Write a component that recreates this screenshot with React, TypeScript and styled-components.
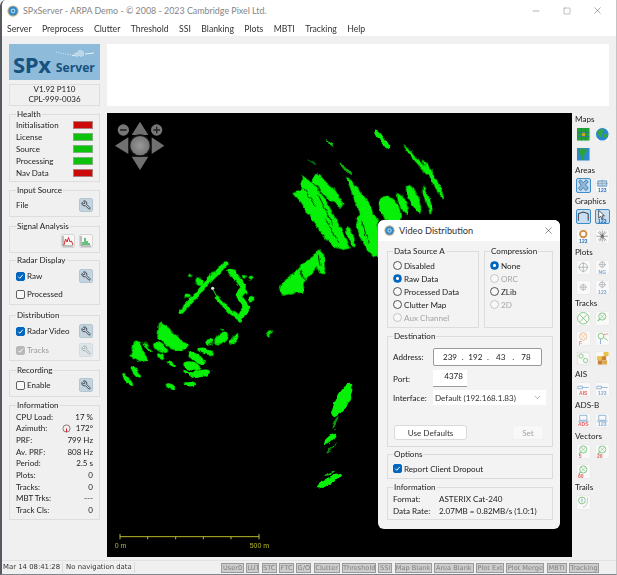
import * as React from 'react';
import styled, { createGlobalStyle } from 'styled-components';
import { Wrench, X, Minus, Square, ChevronDown } from 'lucide-react';

const UI_FONT = 'Lato, "Noto Sans", Arial, sans-serif';

const GlobalStyle = createGlobalStyle`
  html, body {
    margin: 0;
    background: #f0f0f0;
  }
  * {
    box-sizing: border-box;
  }
`;

const Win = styled.div`
  width: 617px;
  height: 575px;
  display: flex;
  flex-direction: column;
  background: #f0f0f0;
  border-left: 2px solid #555a60;
  border-right: 1px solid #c4c4c4;
  border-bottom: 1px solid #80858a;
  border-top-left-radius: 6px;
  font-family: ${UI_FONT};
  font-size: 8px;
  color: #222;
  overflow: hidden;
  filter: blur(0.25px);
`;
const TitleBar = styled.div`
  height: 20px;
  flex: none;
  display: flex;
  align-items: center;
  background: #fff;
  padding: 1px 3px 0 5px;
  color: #858585;
  font-size: 8.9px;
`;
const TitleText = styled.span`
  margin-left: 4px;
  flex: 1;
`;
const WinControl = styled.span`
  width: 31px;
  display: flex;
  justify-content: center;
  color: #444;
`;
const MenuBar = styled.div`
  height: 16px;
  flex: none;
  display: flex;
  align-items: center;
  gap: 10.4px;
  background: #fff;
  padding-left: 5px;
  font-size: 8.7px;
  color: #333;
`;
const Body = styled.div`
  flex: 1;
  min-height: 0;
  display: flex;
  padding: 8px 0 3px 7px;
`;
const LeftColumn = styled.div`
  width: 91px;
  flex: none;
  display: flex;
  flex-direction: column;
`;
const Logo = styled.div`
  height: 36px;
  position: relative;
  background: #8fbbdb;
  display: flex;
  align-items: flex-end;
  padding: 0 0 5px 4px;
  color: #16527d;
  font-family: "Open Sans", sans-serif;
  font-weight: 700;
`;
const LogoBig = styled.span`
  font-size: 22px;
  line-height: 22px;
  letter-spacing: -0.3px;
`;
const LogoSmall = styled.span`
  font-size: 12.2px;
  line-height: 15px;
  margin-left: 5px;
`;
const LogoWave = styled.svg`
  position: absolute;
  left: 46px;
  top: 5px;
`;
const VersionBox = styled.div`
  height: 22px;
  margin-top: 4px;
  border: 1px solid #dedede;
  text-align: center;
  line-height: 9.6px;
  font-size: 8px;
`;
const Group = styled.fieldset<{ $h: number; $top?: number; $pt?: number }>`
  margin: ${(p) => p.$top ?? 0}px 0 0;
  height: ${(p) => p.$h}px;
  min-width: 0;
  border: 1px solid #dddddd;
  padding: ${(p) => p.$pt ?? 0}px 6px 0;
`;
const Legend = styled.legend`
  margin-left: 0;
  padding: 0 1px;
  line-height: 10px;
  font-size: 8.1px;
`;
const Row = styled.div<{ $h?: number; $mt?: number }>`
  height: ${(p) => p.$h ?? 12}px;
  margin-top: ${(p) => p.$mt ?? 0}px;
  display: flex;
  align-items: center;
  justify-content: space-between;
  white-space: nowrap;
`;
const Indicator = styled.span<{ $on: boolean }>`
  width: 20px;
  height: 8px;
  background: ${(p) => (p.$on ? '#0ac20a' : '#cc0a0a')};
  border: 1px solid ${(p) => (p.$on ? '#7fae7f' : '#b08080')};
`;
const ToolButton = styled.span<{ $dim?: boolean }>`
  width: 14px;
  height: 14px;
  display: flex;
  align-items: center;
  justify-content: center;
  background: ${(p) => (p.$dim ? '#dfe6ea' : '#c3d4df')};
  border: 1px solid ${(p) => (p.$dim ? '#d5dde2' : '#b4c6d2')};
  border-radius: 2px;
  color: ${(p) => (p.$dim ? '#a0a8ad' : '#2b3238')};
`;
const FlippedWrench = styled(Wrench)`
  transform: scaleX(-1);
`;
const PlotButton = styled.span`
  width: 14px;
  height: 14px;
  display: flex;
  background: #f8f8f8;
  border: 1px solid #d6d6d6;
  border-radius: 2px;
`;
const ButtonPair = styled.div`
  display: flex;
  justify-content: flex-end;
  gap: 4px;
  margin-top: 3px;
`;
const CheckLabel = styled.span<{ $disabled?: boolean }>`
  display: flex;
  align-items: center;
  gap: 2px;
  color: ${(p) => (p.$disabled ? '#9a9a9a' : 'inherit')};
`;
const CheckBox = styled.span<{ $checked?: boolean; $disabled?: boolean }>`
  width: 9px;
  height: 9px;
  display: flex;
  border-radius: 2px;
  border: 1px solid ${(p) => (p.$disabled ? '#b8b8b8' : p.$checked ? '#0067c0' : '#606060')};
  background: ${(p) => (p.$disabled ? '#b8b8b8' : p.$checked ? '#0067c0' : '#fafafa')};
`;
const AzimuthValue = styled.span`
  display: flex;
  align-items: center;
  gap: 5px;
`;
const Main = styled.div`
  flex: 1;
  min-width: 0;
  display: flex;
  flex-direction: column;
  margin-left: 7px;
`;
const Banner = styled.div`
  height: 62px;
  flex: none;
  background: #fff;
  margin-right: 7px;
`;
const Workspace = styled.div`
  flex: 1;
  min-height: 0;
  display: flex;
  margin-top: 7px;
`;
const Radar = styled.div`
  width: 465px;
  height: 444px;
  flex: none;
  position: relative;
  background: #000;
`;
const RadarPicture = styled.svg`
  display: block;
`;
const Strip = styled.div`
  flex: 1;
  display: flex;
  flex-direction: column;
  gap: 3px;
  margin-left: 4px;
  padding-top: 1px;
`;
const StripTitle = styled.div`
  height: 10px;
  line-height: 10px;
  margin-left: -1px;
  font-size: 8.1px;
`;
const StripGrid = styled.div`
  display: grid;
  grid-template-columns: 15px 15px;
  grid-auto-rows: 15px;
  column-gap: 4px;
  row-gap: 5px;
  margin-top: 3px;
`;
const StripButton = styled.span<{ $active?: boolean }>`
  display: flex;
  background: ${(p) => (p.$active ? '#c9dff1' : '#f9f9f9')};
  border: 1px solid ${(p) => (p.$active ? '#3f8cc9' : '#ececec')};
  border-radius: 2px;
`;
const StatusBar = styled.div`
  height: 14px;
  flex: none;
  display: flex;
  align-items: center;
  border-top: 1px solid #e2e2e2;
  font-family: "DejaVu Sans", sans-serif;
  font-size: 6.9px;
  color: #333;
  padding-left: 1px;
`;
const StatusCell = styled.span`
  padding-right: 2px;
  margin-right: 3px;
  border-right: 1px solid #dcdcdc;
  line-height: 11px;
  white-space: nowrap;
`;
const Tags = styled.div`
  margin-left: auto;
  display: flex;
  gap: 2.3px;
  padding-right: 17px;
`;
const Tag = styled.span<{ $w: number }>`
  width: ${(p) => p.$w}px;
  height: 10px;
  line-height: 8px;
  text-align: center;
  white-space: nowrap;
  overflow: hidden;
  background: #cdcdcd;
  border: 1px solid #9a9a9a;
  color: #808080;
  font-size: 6.6px;
`;

const Dialog = styled.div`
  position: absolute;
  left: 271px;
  top: 107px;
  width: 182px;
  height: 309px;
  display: flex;
  flex-direction: column;
  background: #f3f3f3;
  border-radius: 6px;
  overflow: hidden;
`;
const DialogTitle = styled.div`
  height: 21px;
  flex: none;
  display: flex;
  align-items: center;
  background: #fff;
  padding: 0 6px;
  font-size: 9.2px;
  color: #333;
`;
const DialogTitleText = styled.span`
  flex: 1;
  margin-left: 4px;
`;
const DialogBody = styled.div`
  padding: 5px 7px 0 9px;
  display: flex;
  flex-direction: column;
  font-size: 8.1px;
`;
const SourceRow = styled.div`
  display: flex;
  gap: 5px;
`;
const DialogGroup = styled.fieldset<{ $h: number; $w?: number; $top?: number; $pt?: number }>`
  margin: ${(p) => p.$top ?? 0}px 0 0;
  width: ${(p) => (p.$w ? `${p.$w}px` : '100%')};
  height: ${(p) => p.$h}px;
  min-width: 0;
  border: 1px solid #dcdcdc;
  padding: ${(p) => p.$pt ?? 3}px 5px 0;
`;
const OptionRow = styled.div<{ $disabled?: boolean }>`
  height: 13px;
  display: flex;
  align-items: center;
  gap: 2px;
  color: ${(p) => (p.$disabled ? '#a4a4a4' : 'inherit')};
`;
const RadioDot = styled.span<{ $checked?: boolean; $disabled?: boolean }>`
  width: 9px;
  height: 9px;
  flex: none;
  border-radius: 50%;
  border: 1px solid ${(p) => (p.$checked ? '#0067c0' : p.$disabled ? '#c4c4c4' : '#505050')};
  background: ${(p) => (p.$checked ? 'radial-gradient(circle, #fff 0 1.2px, #0067c0 1.8px)' : '#f8f8f8')};
`;
const FieldRow = styled.div<{ $mt?: number }>`
  display: flex;
  align-items: center;
  margin-top: ${(p) => p.$mt ?? 0}px;
`;
const FieldLabel = styled.span`
  width: 40px;
  flex: none;
`;
const AddressField = styled.div`
  width: 109px;
  height: 18px;
  display: flex;
  align-items: center;
  justify-content: space-between;
  padding: 0 7px 0 8px;
  background: #fff;
  border: 1px solid #999;
  border-radius: 2px;
`;
const Octet = styled.span`
  width: 16px;
  text-align: center;
`;
const PortField = styled.div`
  width: 34px;
  height: 17px;
  background: #fff;
  border-bottom: 1px solid #9c9c9c;
  text-align: right;
  padding: 1px 4px 0 0;
`;
const SelectField = styled.div`
  width: 113px;
  height: 15px;
  display: flex;
  align-items: center;
  justify-content: space-between;
  background: #fff;
  padding: 0 4px 0 2px;
  color: #333;
`;
const ButtonRow = styled.div`
  display: flex;
  justify-content: space-between;
  margin-top: 20px;
  padding: 0 3px 0 1px;
`;
const DialogButton = styled.span<{ $w: number; $disabled?: boolean }>`
  width: ${(p) => p.$w}px;
  height: 15px;
  display: flex;
  align-items: center;
  justify-content: center;
  border-radius: 3px;
  background: ${(p) => (p.$disabled ? '#f8f8f8' : '#fff')};
  border: 1px solid ${(p) => (p.$disabled ? '#f0f0f0' : '#dadada')};
  color: ${(p) => (p.$disabled ? '#a6a6a6' : '#333')};
`;
const InfoRow = styled.div`
  height: 12px;
  display: flex;
  align-items: center;
`;
const InfoLabel = styled.span`
  width: 46px;
  flex: none;
`;

const Check = () => (
  <svg width="7" height="7" viewBox="0 0 8 8">
    <path d="M1.4 4.2 3.2 6 6.6 2" fill="none" stroke="#fff" strokeWidth="1.1" />
  </svg>
);

const Chk: React.FC<{ checked?: boolean; disabled?: boolean; label: string }> = ({ checked, disabled, label }) => (
  <CheckLabel $disabled={disabled}>
    <CheckBox $checked={checked} $disabled={disabled}>{checked && <Check />}</CheckBox>
    {label}
  </CheckLabel>
);

const Radio: React.FC<{ checked?: boolean; disabled?: boolean; label: string }> = ({ checked, disabled, label }) => (
  <OptionRow $disabled={disabled}>
    <RadioDot $checked={checked} $disabled={disabled} />
    {label}
  </OptionRow>
);

const WrenchButton: React.FC<{ dim?: boolean }> = ({ dim }) => (
  <ToolButton $dim={dim}>
    <FlippedWrench size={10} strokeWidth={2} />
  </ToolButton>
);

const AppIcon: React.FC<{ size: number }> = ({ size }) => (
  <svg width={size} height={size} viewBox="0 0 16 16">
    <circle cx="8" cy="8" r="7.5" fill="#c9b28c" />
    <circle cx="8" cy="8" r="6" fill="#2f86c4" />
    <circle cx="8" cy="8" r="3.2" fill="#9fd3ef" />
    <circle cx="8" cy="8" r="1.4" fill="#2a6ea5" />
  </svg>
);

const small = (t: string, color: string, y = 15.4) => (
  <text x="8" y={y} fontSize="5.6" fontWeight="700" textAnchor="middle" fontFamily="Liberation Sans, sans-serif" fill={color}>{t}</text>
);
const crossBox = (c: string, x = 8, y = 6, r = 4) => (
  <g fill="none" stroke={c} strokeWidth="0.9">
    <circle cx={x} cy={y} r={r} />
    <path d={`M${x - r - 1} ${y}H${x + r + 1}M${x} ${y - r - 1}V${y + r + 1}`} />
  </g>
);
const lens = (c: string) => (
  <g fill="none" stroke={c} strokeWidth="1">
    <circle cx="8" cy="6" r="4" />
    <path d="M5.5 3.5 10.5 8.5M10.5 3.5 5.5 8.5" strokeWidth="0.7" />
    <path d="M5 9 3 11" strokeWidth="1.3" />
  </g>
);

const icons: Record<string, React.ReactNode> = {
  mapGrid: (
    <g>
      <rect x="1" y="1" width="14" height="14" fill="#23a23a" />
      <rect x="6" y="6" width="4.5" height="4.5" fill="#c9a52a" />
      <path d="M1 6H15M1 10.5H15M6 1V15M10.5 1V15" stroke="#2a6fb5" strokeWidth="0.8" />
    </g>
  ),
  globe: (
    <g>
      <circle cx="8" cy="8" r="7" fill="#2a86d0" />
      <path d="M3 5c2-3 5-3 6-2s-1 3-1 5-2 4-3 3-2-3-2-6ZM10 8c2-1 4 0 4 1s-2 4-3 3-2-3-1-4Z" fill="#34a83c" />
    </g>
  ),
  mapLand: (
    <g>
      <rect x="1" y="1" width="14" height="14" fill="#2a8ad4" />
      <path d="M3 1.5h8l1 4-3 3 0 6H6L5 9 3 7Z" fill="#2fa13a" />
    </g>
  ),
  areaX: (
    <path d="M3 3.5 5 2l3 3.2L11 2l2.5 2-3 3.5L13.5 11 11 14l-3-3.4L5 14l-2.5-2.5L5.5 8Z" fill="#8fb7d8" stroke="#3b78ad" strokeWidth="1" />
  ),
  area123: (
    <g>
      <path d="M3 3h10v6H3Z" fill="#b9d4ea" stroke="#4a86ba" strokeWidth="0.8" />
      <path d="M1.5 6h13M8 1.5v8" stroke="#8a8a8a" strokeWidth="0.5" />
      {small('123', '#2d6fb0')}
    </g>
  ),
  box: (
    <g>
      <path d="M2.5 13V5l5.5-1.6 5.5 1.6v8" fill="none" stroke="#2a3f55" strokeWidth="1.1" />
      <path d="M2.5 9v1M13.5 9v1M8 3v1" stroke="#d33" strokeWidth="1.2" />
    </g>
  ),
  cursor: (
    <g>
      <path d="M4 1.5 10.5 7.5H7.6L9 10.6l-1.3.6L6.2 8 4 10Z" fill="#fff" stroke="#222" strokeWidth="0.8" />
      {small('123', '#1d62ab', 15.2)}
    </g>
  ),
  ring: (
    <g>
      <circle cx="8" cy="5.5" r="3.6" fill="none" stroke="#cf8f46" strokeWidth="2" />
      {small('123', '#2d6fb0')}
    </g>
  ),
  star: (
    <g stroke="#8a8a8a" strokeWidth="0.8">
      <path d="M8 1.5v13M1.5 8h13M3.4 3.4l9.2 9.2M12.6 3.4l-9.2 9.2M5 2.2l6 11.6M11 2.2 5 13.8" />
      <circle cx="8" cy="8" r="1.6" fill="#666" />
    </g>
  ),
  plot: crossBox('#a8acb0', 8, 8, 4.6),
  plotNg: (
    <g>
      {crossBox('#b0b4b8', 8, 5, 3)}
      {small('NG', '#7fa9d0')}
    </g>
  ),
  plotSmall: crossBox('#b0b4b8', 8, 8, 3),
  plot123: (
    <g>
      {crossBox('#b0b4b8', 8, 5, 3)}
      {small('123', '#7fa9d0')}
    </g>
  ),
  trackX: (
    <g fill="none" stroke="#7fc47f" strokeWidth="1">
      <circle cx="8" cy="8" r="6.4" />
      <path d="M3.6 3.6 12.4 12.4M12.4 3.6 3.6 12.4" />
    </g>
  ),
  trackLens: lens('#7fc47f'),
  trackF: (
    <g>
      <circle cx="8" cy="6" r="4" fill="none" stroke="#eeb98a" strokeWidth="1" />
      <path d="M5.5 3.5 10.5 8.5M10.5 3.5 5.5 8.5" stroke="#eeb98a" strokeWidth="0.7" />
      <text x="3" y="15" fontSize="6" fontWeight="700" fontFamily="Liberation Sans, sans-serif" fill="#e88484">F</text>
    </g>
  ),
  trackBranch: (
    <g fill="none" strokeWidth="1">
      <circle cx="6.5" cy="5.5" r="3.2" stroke="#7fc47f" />
      <path d="M9.5 4 14.5 3" stroke="#e58f8f" />
      <path d="M9.5 7 14 10.5" stroke="#7fc47f" />
      <path d="M6 9 6 14.5" stroke="#7fa9d0" />
    </g>
  ),
  trackPair: (
    <g fill="none" stroke="#7fc47f" strokeWidth="1">
      <rect x="1.5" y="1.5" width="13" height="13" stroke="#d5d5d5" strokeWidth="0.6" />
      <circle cx="5.5" cy="5.5" r="2.4" />
      <circle cx="10.5" cy="10.5" r="2.4" />
    </g>
  ),
  trackBlocks: (
    <g>
      <rect x="9.5" y="1" width="5.5" height="4.7" fill="#e9c24a" />
      <rect x="2" y="5.7" width="5.2" height="4.7" fill="#e9c24a" />
      <rect x="7.2" y="5.7" width="5.2" height="4.7" fill="#c9803a" />
      <rect x="3" y="10.4" width="5.2" height="4.6" fill="#c9803a" />
      <rect x="8.2" y="10.4" width="5.2" height="4.6" fill="#e0a84a" />
    </g>
  ),
  ais: (
    <g>
      <path d="M2 4.5h5v3H2ZM7 6h7" fill="none" stroke="#7fa9d0" strokeWidth="0.9" />
      {small('AIS', '#e65a5a', 14)}
    </g>
  ),
  ais123: (
    <g>
      <path d="M2 4.5h5v3H2ZM7 6h7" fill="none" stroke="#7fa9d0" strokeWidth="0.9" />
      {small('123', '#7fa9d0', 14)}
    </g>
  ),
  ads: (
    <g>
      <path d="M4 2.5h8v5.5H4ZM2 9h12" fill="none" stroke="#7fa9d0" strokeWidth="0.9" />
      {small('ADS', '#e65a5a', 14.6)}
    </g>
  ),
  ads123: (
    <g>
      <path d="M4 2.5h8v5.5H4ZM2 9h12" fill="none" stroke="#7fa9d0" strokeWidth="0.9" />
      {small('123', '#7fa9d0', 14.6)}
    </g>
  ),
  vec5: (
    <g>
      {lens('#7fc47f')}
      <text x="3" y="15" fontSize="5.6" fontWeight="700" fontFamily="Liberation Sans, sans-serif" fill="#e25a5a">5</text>
    </g>
  ),
  vec20: (
    <g>
      {lens('#7fc47f')}
      <text x="2" y="15" fontSize="5.6" fontWeight="700" fontFamily="Liberation Sans, sans-serif" fill="#e25a5a">20</text>
    </g>
  ),
  vec60: (
    <g>
      {lens('#7fc47f')}
      <text x="2" y="15" fontSize="5.6" fontWeight="700" fontFamily="Liberation Sans, sans-serif" fill="#e25a5a">60</text>
    </g>
  ),
  trail: (
    <g fill="none" strokeWidth="1">
      <circle cx="6.5" cy="6" r="3.8" stroke="#7fc47f" />
      <path d="M6.5 3.8v4.4" stroke="#7fa9d0" />
      <path d="M12.5 2.5c1 4 0 10-5 11" stroke="#a9cda9" />
    </g>
  ),
};

const stripSections: { title: string; items: { icon: string; active?: boolean }[] }[] = [
  { title: 'Maps', items: [{ icon: 'mapGrid' }, { icon: 'globe' }, { icon: 'mapLand' }] },
  { title: 'Areas', items: [{ icon: 'areaX', active: true }, { icon: 'area123' }] },
  { title: 'Graphics', items: [{ icon: 'box', active: true }, { icon: 'cursor', active: true }, { icon: 'ring' }, { icon: 'star' }] },
  { title: 'Plots', items: [{ icon: 'plot' }, { icon: 'plotNg' }, { icon: 'plotSmall' }, { icon: 'plot123' }] },
  { title: 'Tracks', items: [{ icon: 'trackX' }, { icon: 'trackLens' }, { icon: 'trackF' }, { icon: 'trackBranch' }, { icon: 'trackPair' }, { icon: 'trackBlocks' }] },
  { title: 'AIS', items: [{ icon: 'ais' }, { icon: 'ais123' }] },
  { title: 'ADS-B', items: [{ icon: 'ads' }, { icon: 'ads123' }] },
  { title: 'Vectors', items: [{ icon: 'vec5' }, { icon: 'vec20' }, { icon: 'vec60' }] },
  { title: 'Trails', items: [{ icon: 'trail' }] },
];

const StripIcon: React.FC<{ name: string }> = ({ name }) => (
  <svg width="13" height="13" viewBox="1 1 14.5 14.5">{icons[name]}</svg>
);

// radar returns, coordinates are 3x page pixels from (105,110)
const G = '#07f007';
const blobs: [number, number, number, number, number, string?][] = [
  [830, 87, 34, 8, 55],
  [674, 97, 19, 3, 40, '#10c810'],
  [622, 155, 15, 2.5, 40, '#0a7a0a'],
  [722, 177, 23, 5, 45, '#0cb80c'],
  [935, 150, 60, 6, 50],
  [985, 207, 65, 8, 62],
  [927, 267, 47, 15, 65],
  [967, 270, 42, 8, 72],
  [894, 282, 35, 11, 65],
  [855, 300, 45, 28, 60],
  [737, 380, 34, 9, 70],
  [650, 300, 62, 22, 55],
  [618, 240, 38, 15, 50],
  [692, 378, 42, 13, 58],
  [795, 385, 60, 20, 72],
  [255, 496, 6, 5, 0],
  [248, 558, 9, 7, 0],
  [282, 515, 15, 11, 40],
  [325, 492, 10, 7, -40],
  [438, 504, 7, 7, 0],
  [417, 500, 6, 5, 0],
  [438, 566, 10, 8, 0],
  [385, 490, 14, 11, 40],
  [412, 545, 13, 12, 0],
  [493, 670, 11, 5, -55],
  [387, 687, 22, 7, -50],
  [350, 685, 25, 13, -35],
  [312, 695, 11, 8, -20],
  [165, 712, 24, 12, 35],
  [128, 713, 20, 4, 50],
  [165, 738, 13, 6, 30],
  [200, 761, 17, 6, 30],
  [93, 786, 21, 8, 50],
  [68, 810, 23, 7, 48],
  [198, 830, 17, 8, 25],
  [255, 821, 18, 8, 5],
  [287, 791, 32, 11, -12],
  [250, 790, 18, 5, 30],
  [260, 768, 26, 13, 15],
  [275, 745, 30, 12, 35],
  [300, 723, 24, 9, 15],
  [318, 733, 11, 5, 0],
  [350, 662, 4, 3, 0],
  [712, 870, 54, 19, -62],
  [690, 936, 20, 3.5, -60, '#0a9a0a'],
  [690, 957, 3, 3, 0, '#0a9a0a'],
  [675, 988, 24, 7, -42],
  [680, 1014, 22, 2, -40, '#0a8a0a'],
  [665, 1023, 5, 2, -30, '#0a8a0a'],
  [674, 1090, 17, 3, -25, '#0cc00c'],
  [673, 1112, 43, 10, -30],
];
const polys: string[] = [
  'M632,188 L682,232 L718,280 L708,294 L670,268 L622,215 Z',
  'M590,195 L625,222 L660,265 L700,340 L735,415 L712,420 L685,410 L650,372 L620,330 L588,280 L562,250 L578,242 L590,240 Z',
  'M722,203 L742,212 L782,265 L818,330 L824,444 L795,425 L782,350 L748,270 Z',
  'M752,325 L772,308 L792,345 L818,442 L790,425 L762,378 Z',
  'M522,542 L530,518 L570,488 L590,463 L625,438 L640,418 L657,433 L660,492 L645,492 L635,472 L602,512 L592,522 L597,552 L570,547 L535,557 Z',
  'M163,633 L252,708 L228,726 L195,716 L157,682 Z',
  'M88,688 L106,693 L114,725 L132,750 L105,757 L88,747 L73,737 L83,715 Z',
];

const Compass = () => (
  <g>
    <defs>
      <radialGradient id="hub">
        <stop offset="0" stopColor="#9a9a9a" />
        <stop offset="1" stopColor="#757575" />
      </radialGradient>
    </defs>
    <path d="M105,35 L80,75 H130 Z M105,180 L80,140 H130 Z M30,107 L70,82 V132 Z M178,107 L140,82 V132 Z" fill="#707070" />
    <circle cx="105" cy="107" r="34" fill="#111" />
    <circle cx="105" cy="107" r="29" fill="url(#hub)" />
    <circle cx="55" cy="60" r="17" fill="#777" />
    <circle cx="155" cy="60" r="17" fill="#777" />
    <path d="M45 60H65M145 60H165M155 50V70" stroke="#222" strokeWidth="4" />
  </g>
);

const ScaleBar = () => (
  <g stroke="#b8b82a" fill="#b8b82a">
    <path d="M45 1280H462M45 1272V1288M128 1280V1288M212 1280V1288M295 1280V1288M378 1280V1288M462 1272V1288" strokeWidth="3" fill="none" />
    <text x="29" y="1315" fontSize="21" stroke="none" fontFamily="Liberation Sans, sans-serif">0 m</text>
    <text x="434" y="1315" fontSize="21" stroke="none" fontFamily="Liberation Sans, sans-serif">500 m</text>
  </g>
);

const healthRows = [
  { label: 'Initialisation', on: false },
  { label: 'License', on: true },
  { label: 'Source', on: true },
  { label: 'Processing', on: true },
  { label: 'Nav Data', on: false },
];
const infoRows = [
  ['CPU Load:', '17 %'],
  ['Azimuth:', '172°'],
  ['PRF:', '799 Hz'],
  ['Av. PRF:', '808 Hz'],
  ['Period:', '2.5 s'],
  ['Plots:', '0'],
  ['Tracks:', '0'],
  ['MBT Trks:', '---'],
  ['Track Cls:', '0'],
];
const tags: [string, number][] = [
  ['User0', 23], ['LUT', 13], ['STC', 15], ['FTC', 15], ['G/O', 15], ['Clutter', 26], ['Threshold', 34],
  ['SSI', 14], ['Map Blank', 37], ['Area Blank', 40], ['Plot Ext', 28], ['Plot Merge', 38], ['MBTI', 20], ['Tracking', 30],
];
const menus = ['Server', 'Preprocess', 'Clutter', 'Threshold', 'SSI', 'Blanking', 'Plots', 'MBTI', 'Tracking', 'Help'];

const App: React.FC = () => (
  <Win>
    <GlobalStyle />
    <TitleBar>
      <AppIcon size={12} />
      <TitleText>SPxServer - ARPA Demo - © 2008 - 2023 Cambridge Pixel Ltd.</TitleText>
      <WinControl><Minus size={10} strokeWidth={1} /></WinControl>
      <WinControl><Square size={8} strokeWidth={1} /></WinControl>
      <WinControl><X size={11} strokeWidth={1} /></WinControl>
    </TitleBar>
    <MenuBar>
      {menus.map((m) => <span key={m}>{m}</span>)}
    </MenuBar>
    <Body>
      <LeftColumn>
        <Logo>
          <LogoWave width="40" height="11" viewBox="0 0 40 11">
            <path d="M1 3 10 5 17 6" stroke="#d7e8f3" strokeWidth="1" strokeDasharray="1 1.4" fill="none" />
            <path d="M17 6 20 7V4M22 8V3M24 7V1M26 8V1M28 7V2M30 5 39 4" stroke="#e8f3f9" strokeWidth="1" fill="none" />
          </LogoWave>
          <LogoBig>SPx</LogoBig>
          <LogoSmall>Server</LogoSmall>
        </Logo>
        <VersionBox>
          V1.92 P110
          <br />
          CPL-999-0036
        </VersionBox>
        <Group $h={73} $top={3}>
          <Legend>Health</Legend>
          {healthRows.map((r) => (
            <Row key={r.label}>
              {r.label}
              <Indicator $on={r.on} />
            </Row>
          ))}
        </Group>
        <Group $h={32} $top={3} $pt={3}>
          <Legend>Input Source</Legend>
          <Row $h={14}>
            File
            <WrenchButton />
          </Row>
        </Group>
        <Group $h={32} $top={4}>
          <Legend>Signal Analysis</Legend>
          <ButtonPair>
            <PlotButton>
              <svg width="12" height="12" viewBox="0 0 12 12">
                <path d="M1 1V11H11" stroke="#555" strokeWidth="0.7" fill="none" />
                <path d="M2 10 3.5 4 5 7 6.5 2.5 8 7 9.5 6 11 10" stroke="#d92b2b" strokeWidth="1" fill="none" />
              </svg>
            </PlotButton>
            <PlotButton>
              <svg width="12" height="12" viewBox="0 0 12 12">
                <path d="M1 1V11H11" stroke="#555" strokeWidth="0.7" fill="none" />
                <path d="M3 10V7M5 10V3M7 10V6M9 10V8" stroke="#2aa84a" strokeWidth="1.4" fill="none" />
              </svg>
            </PlotButton>
          </ButtonPair>
        </Group>
        <Group $h={50} $top={2} $pt={4}>
          <Legend>Radar Display</Legend>
          <Row $h={14}>
            <Chk checked label="Raw" />
            <WrenchButton />
          </Row>
          <Row $h={14} $mt={4}>
            <Chk label="Processed" />
          </Row>
        </Group>
        <Group $h={51} $top={5} $pt={4}>
          <Legend>Distribution</Legend>
          <Row $h={14}>
            <Chk checked label="Radar Video" />
            <WrenchButton />
          </Row>
          <Row $h={14} $mt={5}>
            <Chk checked disabled label="Tracks" />
            <WrenchButton dim />
          </Row>
        </Group>
        <Group $h={32} $top={4} $pt={3}>
          <Legend>Recording</Legend>
          <Row $h={14}>
            <Chk label="Enable" />
            <WrenchButton />
          </Row>
        </Group>
        <Group $h={120} $top={3} $pt={1}>
          <Legend>Information</Legend>
          {infoRows.map(([label, value]) => (
            <Row key={label} $h={11.65}>
              <span>{label}</span>
              {label === 'Azimuth:' ? (
                <AzimuthValue>
                  <svg width="9" height="9" viewBox="0 0 9 9">
                    <circle cx="4.5" cy="4.5" r="3.6" fill="none" stroke="#7a5a5a" strokeWidth="0.8" />
                    <path d="M4.5 4.5V8" stroke="#d02020" strokeWidth="1" />
                  </svg>
                  {value}
                </AzimuthValue>
              ) : <span>{value}</span>}
            </Row>
          ))}
        </Group>
      </LeftColumn>
      <Main>
        <Banner />
        <Workspace>
          <Radar>
            <RadarPicture width="465" height="444" viewBox="6 9 1395 1332">
              <defs>
                <filter id="rough" x="0" y="0" width="1395" height="1332" filterUnits="userSpaceOnUse" colorInterpolationFilters="sRGB">
                  <feTurbulence type="fractalNoise" baseFrequency="0.05" numOctaves="2" seed="4" result="noise" />
                  <feDisplacementMap in="SourceGraphic" in2="noise" scale="14" xChannelSelector="R" yChannelSelector="G" />
                </filter>
              </defs>
              <g filter="url(#rough)">
                <g fill={G}>
                  {polys.map((d) => <path key={d} d={d} />)}
                  {blobs.map(([x, y, rx, ry, a, c]) => (
                    <ellipse key={`${x}-${y}`} cx={x} cy={y} rx={rx} ry={ry} fill={c} transform={`rotate(${a} ${x} ${y})`} />
                  ))}
                </g>
                <g fill="none" stroke={G} strokeLinecap="round" strokeLinejoin="round">
                  <path d="M230,603 L275,555 L300,525 L330,495 L360,462" strokeWidth="15" />
                  <path d="M375,482 L400,510 L415,530 L400,555 L425,590 L405,625" strokeWidth="16" />
                  <path d="M335,562 L375,605 L405,628" strokeWidth="12" />
                </g>
                <g stroke="#000" strokeWidth="2.5" fill="none">
                  <path d="M597,235 L632,290M640,255 L682,340M660,325 L702,398M770,330 L790,400M645,470 L640,435M600,510 L585,480" />
                </g>
              </g>
              <path d="M325,540 L338,565" fill="none" stroke={G} strokeWidth="3" />
              <circle cx="323" cy="535" r="5" fill="#c8f0c8" />
              <Compass />
              <ScaleBar />
            </RadarPicture>
            <Dialog>
              <DialogTitle>
                <AppIcon size={11} />
                <DialogTitleText>Video Distribution</DialogTitleText>
                <X size={11} strokeWidth={1.2} />
              </DialogTitle>
              <DialogBody>
                <SourceRow>
                  <DialogGroup $h={82} $w={92}>
                    <Legend>Data Source A</Legend>
                    <Radio label="Disabled" />
                    <Radio checked label="Raw Data" />
                    <Radio label="Processed Data" />
                    <Radio label="Clutter Map" />
                    <Radio disabled label="Aux Channel" />
                  </DialogGroup>
                  <DialogGroup $h={82} $w={69}>
                    <Legend>Compression</Legend>
                    <Radio checked label="None" />
                    <Radio disabled label="ORC" />
                    <Radio label="ZLib" />
                    <Radio disabled label="2D" />
                  </DialogGroup>
                </SourceRow>
                <DialogGroup $h={116} $top={3} $pt={7}>
                  <Legend>Destination</Legend>
                  <FieldRow>
                    <FieldLabel>Address:</FieldLabel>
                    <AddressField>
                      <Octet>239</Octet>.<Octet>192</Octet>.<Octet>43</Octet>.<Octet>78</Octet>
                    </AddressField>
                  </FieldRow>
                  <FieldRow $mt={4}>
                    <FieldLabel>Port:</FieldLabel>
                    <PortField>4378</PortField>
                  </FieldRow>
                  <FieldRow $mt={3}>
                    <FieldLabel>Interface:</FieldLabel>
                    <SelectField>
                      Default (192.168.1.83)
                      <ChevronDown size={9} strokeWidth={1} />
                    </SelectField>
                  </FieldRow>
                  <ButtonRow>
                    <DialogButton $w={73}>Use Defaults</DialogButton>
                    <DialogButton $w={32} $disabled>Set</DialogButton>
                  </ButtonRow>
                </DialogGroup>
                <DialogGroup $h={30} $top={2} $pt={3}>
                  <Legend>Options</Legend>
                  <OptionRow>
                    <Chk checked label="Report Client Dropout" />
                  </OptionRow>
                </DialogGroup>
                <DialogGroup $h={38} $top={3} $pt={1}>
                  <Legend>Information</Legend>
                  <InfoRow>
                    <InfoLabel>Format:</InfoLabel>
                    ASTERIX Cat-240
                  </InfoRow>
                  <InfoRow>
                    <InfoLabel>Data Rate:</InfoLabel>
                    2.07MB = 0.82MB/s (1.0:1)
                  </InfoRow>
                </DialogGroup>
              </DialogBody>
            </Dialog>
          </Radar>
          <Strip>
            {stripSections.map((s) => (
              <div key={s.title}>
                <StripTitle>{s.title}</StripTitle>
                <StripGrid>
                  {s.items.map((it) => (
                    <StripButton key={it.icon} $active={it.active}>
                      <StripIcon name={it.icon} />
                    </StripButton>
                  ))}
                </StripGrid>
              </div>
            ))}
          </Strip>
        </Workspace>
      </Main>
    </Body>
    <StatusBar>
      <StatusCell>Mar 14 08:41:28</StatusCell>
      <StatusCell>No navigation data</StatusCell>
      <Tags>
        {tags.map(([t, w]) => <Tag key={t} $w={w}>{t}</Tag>)}
      </Tags>
    </StatusBar>
  </Win>
);

export default App;
